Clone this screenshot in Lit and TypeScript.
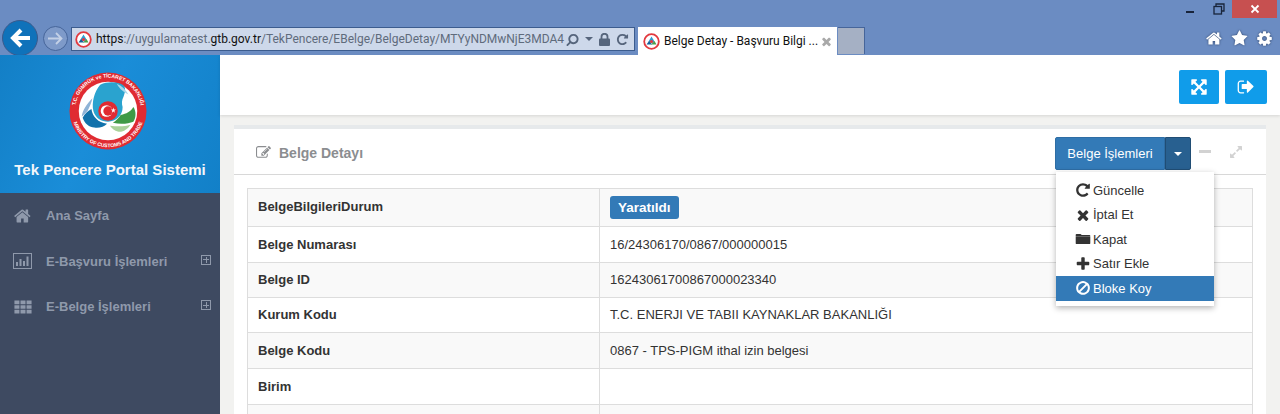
import { LitElement, html, css } from 'lit';
import { customElement } from 'lit/decorators.js';

// font-awesome style glyphs on a 1792 grid
const ICONS: Record<string, string> = {
  home: 'M1408 992v480q0 26-19 45t-45 19h-384v-384h-256v384h-384q-26 0-45-19t-19-45v-480q0-1 .5-3t.5-3l575-474 575 474q1 2 1 6zm223-69l-62 74q-8 9-21 11h-3q-13 0-21-7l-692-577-692 577q-12 8-24 7-13-2-21-11l-62-74q-8-10-7-23.5t11-21.5l719-599q32-26 76-26t76 26l244 204v-195q0-14 9-23t23-9h192q14 0 23 9t9 23v408l219 182q10 8 11 21.5t-7 23.5z',
  repeat: 'M1664 256v448q0 26-19 45t-45 19h-448q-42 0-59-40-17-39 14-69l138-138q-148-137-349-137-104 0-198.5 40.5t-163.5 109.5-109.5 163.5-40.5 198.5 40.5 198.5 109.5 163.5 163.5 109.5 198.5 40.5q119 0 225-52t179-147q7-10 23-12 15 0 25 9l137 138q9 8 9.5 20.5t-7.5 22.5q-109 132-264 204.5t-327 72.5q-156 0-298-61t-245-164-164-245-61-298 61-298 164-245 245-164 298-61q147 0 284.5 55.5t244.5 156.5l130-129q29-31 70-14 39 17 39 59z',
  times: 'M1490 1322q0 40-28 68l-136 136q-28 28-68 28t-68-28l-294-294-294 294q-28 28-68 28t-68-28l-136-136q-28-28-28-68t28-68l294-294-294-294q-28-28-28-68t28-68l136-136q28-28 68-28t68 28l294 294 294-294q28-28 68-28t68 28l136 136q28 28 28 68t-28 68l-294 294 294 294q28 28 28 68z',
  plus: 'M1600 736v192q0 40-28 68t-68 28h-416v416q0 40-28 68t-68 28h-192q-40 0-68-28t-28-68v-416h-416q-40 0-68-28t-28-68v-192q0-40 28-68t68-28h416v-416q0-40 28-68t68-28h192q40 0 68 28t28 68v416h416q40 0 68 28t28 68z',
  ban: 'M1440 893q0-161-87-295l-754 753q137 89 297 89 111 0 211.5-43.5t173.5-116.5 116-174.5 43-212.5zm-999 299l755-754q-135-91-300-91-148 0-273 73t-198 199-73 274q0 162 89 299zm1223-299q0 157-61 300t-163.5 246-245 164-298.5 61-298.5-61-245-164-163.5-246-61-300 61-299.5 163.5-245.5 245-164 298.5-61 298.5 61 245 164 163.5 245.5 61 299.5z',
  folder: 'M80 420q0-96 96-96h420q70 0 110 60l30 50h880q96 0 96 96v64h-1632zM80 612h1632v760q0 96-96 96h-1440q-96 0-96-96z',
  search: 'M1216 832q0-185-131.500-316.500t-316.500-131.500-316.500 131.500-131.500 316.500 131.500 316.500 316.500 131.500 316.500-131.500 131.500-316.500zm512 832q0 52-38 90t-90 38q-54 0-90-38l-343-342q-179 124-399 124-143 0-273.500-55.500t-225-150-150-225-55.500-273.500 55.500-273.500 150-225 225-150 273.500-55.500 273.500 55.500 225 150 150 225 55.500 273.500q0 220-124 399l343 343q37 37 37 90z',
  star: 'M1728 647q0 22-26 48l-363 354 86 500q1 7 1 20 0 21-10.500 35.500t-30.500 14.500q-19 0-40-12l-449-236-449 236q-22 12-40 12-21 0-31.500-14.500t-10.500-35.500q0-6 2-20l86-500-364-354q-25-27-25-48 0-37 56-46l502-73 225-455q19-41 49-41t49 41l225 455 502 73q56 9 56 46z',
  cog: 'M1152 896q0-106-75-181t-181-75-181 75-75 181 75 181 181 75 181-75 75-181zm512-109v222q0 12-8 23t-20 13l-185 28q-19 54-39 91 35 50 107 138 10 12 10 25t-9 23q-27 37-99 108t-94 71q-12 0-26-9l-138-108q-44 23-91 38-16 136-29 186-7 28-36 28h-222q-14 0-24.500-8.500t-11.500-21.500l-28-184q-49-16-90-37l-141 107q-10 9-25 9-14 0-25-11-126-114-165-168-7-10-7-23 0-12 8-23 15-21 51-66.500t54-70.500q-27-50-41-99l-183-27q-13-2-21-12.500t-8-23.500v-222q0-12 8-23t19-13l186-28q14-46 39-92-40-57-107-138-10-12-10-24 0-10 9-23 26-36 98.500-107.500t94.500-71.500q13 0 26 10l138 107q44-23 91-38 16-136 29-186 7-28 36-28h222q14 0 24.500 8.500t11.500 21.500l28 184q49 16 90 37l142-107q9-9 24-9 13 0 25 10 129 119 165 170 7 8 7 22 0 12-8 23-15 21-51 66.500t-54 70.500q26 50 41 98l183 28q13 2 21 12.500t8 23.500z',
  arrows: 'M1411 541l-355 355 355 355 144-144q29-31 70-14 39 17 39 59v448q0 26-19 45t-45 19h-448q-42 0-59-40-17-39 14-69l144-144-355-355-355 355 144 144q31 30 14 69-17 40-59 40h-448q-26 0-45-19t-19-45v-448q0-42 40-59 39-17 69 14l144 144 355-355-355-355-144 144q-19 19-45 19-12 0-24-5-40-17-40-59v-448q0-26 19-45t45-19h448q42 0 59 40 17 39-14 69l-144 144 355 355 355-355-144-144q-31-30-14-69 17-40 59-40h448q26 0 45 19t19 45v448q0 42-39 59-13 5-25 5-26 0-45-19z',
  expand: 'M883 1056q0 13-10 23l-332 332 144 144q19 19 19 45t-19 45-45 19h-448q-26 0-45-19t-19-45v-448q0-26 19-45t45-19 45 19l144 144 332-332q10-10 23-10t23 10l114 114q10 10 10 23zm781-864v448q0 26-19 45t-45 19-45-19l-144-144-332 332q-10 10-23 10t-23-10l-114-114q-10-10-10-23t10-23l332-332-144-144q-19-19-19-45t19-45 45-19h448q26 0 45 19t19 45z',
  th: 'M128 320h448v320h-448zM672 320h448v320h-448zM1216 320h448v320h-448zM128 736h448v320h-448zM672 736h448v320h-448zM1216 736h448v320h-448zM128 1152h448v320h-448zM672 1152h448v320h-448zM1216 1152h448v320h-448z',
  signout: 'M704 1440q0 4 1 20t.5 26.500-3 23.500-10 19.500-20.500 6.500h-320q-119 0-203.500-84.500t-84.500-203.500v-704q0-119 84.500-203.500t203.500-84.500h320q13 0 22.500 9.500t9.500 22.500q0 4 1 20t.5 26.500-3 23.500-10 19.500-20.500 6.500h-320q-66 0-113 47t-47 113v704q0 66 47 113t113 47h312l11.500 1 11.500 3 8 5.500 7 9 2 13.500zM1632 896l-544 544q-19 19-45 19t-45-19-19-45v-288h-448q-26 0-45-19t-19-45v-384q0-26 19-45t45-19h448v-288q0-26 19-45t45-19 45 19l544 544q19 19 19 45z',
  edit: 'M888 1184l116-116-152-152-116 116v56h96v96h56zm440-720q-16-16-33 1l-350 350q-17 17-1 33t33-1l350-350q17-17 1-33zm80 594v190q0 119-84.500 203.500t-203.500 84.500h-832q-119 0-203.500-84.500t-84.500-203.500v-832q0-119 84.500-203.500t203.500-84.500h832q63 0 117 25 15 7 18 23 3 17-9 29l-49 49q-14 14-32 8-23-6-45-6h-832q-66 0-113 47t-47 113v832q0 66 47 113t113 47h832q66 0 113-47t47-113v-126q0-13 9-22l64-64q15-15 35-7t20 29zm-96-738l288 288-672 672h-288v-288zm444 132l-92 92-288-288 92-92q28-28 68-28t68 28l152 152q28 28 28 68t-28 68z',
};

const icon = (name: string, size: number, color = 'currentColor') => html`
  <svg class="ico" style="flex:none" width=${size} height=${size} viewBox="0 0 1792 1792" fill=${color}><path d=${ICONS[name]}></path></svg>
`;

const crest = (size: number) => html`
  <svg width=${size} height=${size} viewBox="0 0 80 80">
    <defs>
      <path id="arcTop" d="M6.500 44a33.800 33.800 0 1 1 67 0"></path>
      <path id="arcBot" d="M2.800 40a37.200 37.200 0 0 0 74.400 0"></path>
    </defs>
    <circle cx="40" cy="40" r="39.500" fill="#e02b32"></circle>
    <circle cx="40" cy="40" r="30" fill="#fff"></circle>
    <path d="M32 13c7-3 14-3 21-1 6 2 5 8 3 13-2 4-2 7-1 11 0 9-7 15-15 15-7 0-13-4-15-11-2-9 1-20 7-27z" fill="#2aa3cf"></path>
    <path d="M49 12c5 2 9 6 12 11-4-2-9-5-12-11z" fill="#a8d6ea"></path>
    <path d="M14 47c2-4 5-7 9-9 1 8 7 14 16 15-3 3-8 5-13 4-5 0-10-4-12-10z" fill="#1272ab"></path>
    <path d="M13 46c1-7 5-13 11-19-1 5-3 9-5 13-2 2-4 4-6 6z" fill="#8fb3d6"></path>
    <path d="M53 44c6-1 10-3 13-8 3 4 3 11 0 15-5 2-13 3-21 1 3-2 6-5 8-8z" fill="#3f9a46"></path>
    <path d="M42 55c8 1 15 1 21-1-3 5-8 8-13 7-3-1-6-3-8-6z" fill="#a9d29a"></path>
    <circle cx="40" cy="40" r="10" fill="#e02b32"></circle>
    <circle cx="38.500" cy="40" r="6" fill="#fff"></circle>
    <circle cx="40" cy="40" r="4.800" fill="#e02b32"></circle>
    <path d="M45.500 36.500l.6 2 2 0-1.600 1.200.6 2-1.600-1.200-1.600 1.200.6-2-1.600-1.200 2 0z" fill="#fff"></path>
    <text class="crest-text"><textPath href="#arcTop" startOffset="50%" text-anchor="middle">T.C. GÜMRÜK ve TİCARET BAKANLIĞI</textPath></text>
    <text class="crest-text"><textPath href="#arcBot" startOffset="50%" text-anchor="middle">MINISTRY OF CUSTOMS AND TRADE</textPath></text>
  </svg>
`;

const favicon = () => html`
  <svg style="flex:none" width="17" height="17" viewBox="0 0 17 17">
    <circle cx="8.500" cy="8.500" r="7.300" fill="#fff" stroke="#e2393f" stroke-width="1.800"></circle>
    <path d="M8.500 3.500l3 5-3 2-3-2z" fill="#2f9ad0"></path>
    <path d="M3.500 11.500l2.500-3.500 3 3.500z" fill="#145f9c"></path>
    <path d="M8 11.500l3.500-3.500 2 3.500z" fill="#4a9e4a"></path>
    <circle cx="8.500" cy="8.500" r="1.600" fill="#e2393f"></circle>
  </svg>
`;

@customElement('browser-bar')
export class BrowserBar extends LitElement {
  static styles = css`
    :host {
      display: block;
      height: 55px;
      background: #6b8cc2;
      font-family: Roboto, sans-serif;
    }
    .caption {
      height: 18px;
      display: flex;
      justify-content: flex-end;
      padding-right: 3px;
    }
    .win {
      display: flex;
      align-items: center;
      justify-content: center;
    }
    .min { width: 20px; margin-right: 13px; }
    .min i { display: block; width: 8px; height: 2px; margin-top: 6px; background: #18243a; }
    .restore { width: 12px; margin-right: 7px; }
    .close { width: 45px; background: #c75050; }
    .tools {
      height: 37px;
      display: flex;
      align-items: flex-start;
      padding-left: 2px;
    }
    .back {
      width: 36px;
      height: 36px;
      margin-top: 2px;
      box-sizing: border-box;
      border-radius: 50%;
      background: #0f72ba;
      border: 1px solid #3a5a8c;
      display: flex;
      align-items: center;
      justify-content: center;
    }
    .fwd {
      width: 25px;
      height: 25px;
      margin: 8px 0 0 5px;
      box-sizing: border-box;
      border-radius: 50%;
      background: #7e9ac9;
      border: 1px solid #46659a;
      display: flex;
      align-items: center;
      justify-content: center;
    }
    .address {
      width: 564px;
      height: 24px;
      margin: 9px 0 0 3px;
      box-sizing: border-box;
      display: flex;
      align-items: center;
      padding: 0 5px 0 3px;
      background: #cdd8ea;
      border: 1px solid #3c5c8e;
      font-size: 12px;
      color: #5f6b7c;
      white-space: nowrap;
    }
    .url { margin-left: 4px; flex: 1; min-width: 0; }
    .url b { font-weight: 400; color: #111; }
    .addr-ico { display: flex; align-items: center; gap: 6px; color: #56657c; }
    .flip { display: flex; transform: scaleX(-1); }
    .caret { width: 0; height: 0; border: 4px solid transparent; border-top: 4px solid #56657c; border-bottom: 0; }
    .tab {
      width: 199px;
      height: 28px;
      margin: 9px 0 0 3px;
      box-sizing: border-box;
      display: flex;
      align-items: center;
      padding: 0 4px 0 5px;
      background: #fff;
      font-size: 12px;
      color: #111;
      white-space: nowrap;
    }
    .tab span { margin-left: 4px; flex: 1; }
    .newtab {
      width: 27px;
      height: 27px;
      margin: 9px 0 0 1px;
      box-sizing: border-box;
      background: #a5b0c4;
      border: 1px solid #46659a;
      border-bottom: 0;
      border-left: 0;
    }
    .right {
      margin-left: auto;
      display: flex;
      gap: 8px;
      padding: 12px 7px 0 0;
    }
    .right svg { filter: drop-shadow(0 0 1px #2c4166); }
  `;

  render() {
    return html`
      <div class="caption">
        <div class="win min"><i></i></div>
        <div class="win restore">
          <svg width="12" height="12" viewBox="0 0 12 12" fill="none" stroke="#18243a" stroke-width="1.300">
            <path d="M3 3V1h8v7H9"></path><rect x="1" y="3.500" width="7.500" height="7.500"></rect>
          </svg>
        </div>
        <div class="win close">
          <svg width="10" height="10" viewBox="0 0 10 10" stroke="#fff" stroke-width="1.800"><path d="M1.500 1.500l7 7M8.500 1.500l-7 7"></path></svg>
        </div>
      </div>
      <div class="tools">
        <div class="back">
          <svg width="22" height="20" viewBox="0 0 22 20" fill="none" stroke="#fff" stroke-width="4"><path d="M21 10H4M12 2l-8 8 8 8"></path></svg>
        </div>
        <div class="fwd">
          <svg width="15" height="13" viewBox="0 0 15 13" fill="none" stroke="#c3d0e6" stroke-width="1.800"><path d="M0 6.500h13M8 1l5.500 5.500L8 12"></path></svg>
        </div>
        <div class="address">
          ${favicon()}
          <div class="url"><b>https</b>://uygulamatest.<b>gtb.gov.tr</b>/TekPencere/EBelge/BelgeDetay/MTYyNDMwNjE3MDA4</div>
          <div class="addr-ico">
            <span class="flip">${icon('search', 13)}</span><i class="caret"></i>
            <svg width="11" height="13" viewBox="0 0 11 13" fill="currentColor">
              <rect x="0" y="5.500" width="11" height="7.500" rx="1"></rect>
              <path d="M2.500 6V3.800a3 3 0 0 1 6 0V6" fill="none" stroke="currentColor" stroke-width="1.800"></path>
            </svg>
            ${icon('repeat', 13)}
          </div>
        </div>
        <div class="tab">
          ${favicon()}
          <span>Belge Detay - Başvuru Bilgi ...</span>
          ${icon('times', 13, '#a9a9a9')}
        </div>
        <div class="newtab"></div>
        <div class="right">
          ${icon('home', 17, '#fff')}${icon('star', 17, '#fff')}${icon('cog', 17, '#fff')}
        </div>
      </div>
    `;
  }
}

@customElement('side-bar')
export class SideBar extends LitElement {
  static styles = css`
    :host {
      display: block;
      width: 220px;
      flex: none;
      background: #3e4a61;
      font-family: "Liberation Sans", Arial, sans-serif;
    }
    .brand {
      height: 138px;
      box-sizing: border-box;
      padding-top: 17px;
      display: flex;
      flex-direction: column;
      align-items: center;
      background: linear-gradient(115deg, #137fc6 0%, #1a8dd8 45%, #1280c8 100%);
    }
    .brand svg { margin-right: 4px; }
    .crest-text {
      font: bold 5.200px "Liberation Sans", sans-serif;
      fill: #fff;
    }
    .brand h1 {
      margin: 11px 0 0;
      font-size: 15px;
      font-weight: 700;
      color: #f1f6fb;
      white-space: nowrap;
    }
    .menu {
      display: flex;
      flex-direction: column;
    }
    .item {
      height: 45.500px;
      display: flex;
      align-items: center;
      padding: 0 9px 0 13px;
      color: #8f99ab;
      font-size: 13px;
      font-weight: 700;
    }
    .item .i { width: 19px; height: 19px; display: flex; align-items: center; justify-content: center; margin-right: 14px; }
    .item span { flex: 1; }
    .box {
      width: 8px;
      height: 8px;
      border: 1px solid #8f99ab;
      position: relative;
      margin-top: -3px;
    }
    .box::before { content: ""; position: absolute; left: 1px; right: 1px; top: 3.500px; height: 1px; background: #8f99ab; }
    .box::after { content: ""; position: absolute; top: 1px; bottom: 1px; left: 3.500px; width: 1px; background: #8f99ab; }
  `;

  render() {
    return html`
      <div class="brand">
        ${crest(78)}
        <h1>Tek Pencere Portal Sistemi</h1>
      </div>
      <div class="menu">
        <div class="item"><div class="i">${icon('home', 18)}</div><span>Ana Sayfa</span></div>
        <div class="item">
          <div class="i">
            <svg width="19" height="16" viewBox="0 0 19 16" fill="#8f99ab">
              <rect x=".5" y=".5" width="18" height="15" fill="none" stroke="#8f99ab"></rect>
              <rect x="3" y="9" width="2" height="4"></rect><rect x="6.500" y="6" width="2" height="7"></rect>
              <rect x="10" y="8" width="2" height="5"></rect><rect x="13.500" y="3.500" width="2" height="9.500"></rect>
            </svg>
          </div>
          <span>E-Başvuru İşlemleri</span><i class="box"></i>
        </div>
        <div class="item"><div class="i">${icon('th', 20)}</div><span>E-Belge İşlemleri</span><i class="box"></i></div>
      </div>
    `;
  }
}

const ROWS: [string, string, number][] = [
  ['Belge Numarası', '16/24306170/0867/000000015', 36],
  ['Belge ID', '16243061700867000023340', 35],
  ['Kurum Kodu', 'T.C. ENERJI VE TABII KAYNAKLAR BAKANLIĞI', 35],
  ['Belge Kodu', '0867 - TPS-PIGM ithal izin belgesi', 36],
  ['Birim', '', 36],
  ['', '', 36],
];

@customElement('app-root')
export class AppRoot extends LitElement {
  static styles = css`
    :host {
      display: block;
      height: 100vh;
      overflow: hidden;
      font-family: "Liberation Sans", Arial, sans-serif;
      color: #333;
    }
    .page { display: flex; height: 359px; overflow: hidden; }
    .main { flex: 1; min-width: 0; background: #f2f2f0; }
    .top {
      height: 60px;
      box-sizing: border-box;
      display: flex;
      justify-content: flex-end;
      gap: 6px;
      padding: 15px 13px 0 0;
      background: #fff;
      box-shadow: 0 1px 3px rgba(0, 0, 0, .12);
    }
    .top button {
      width: 40px;
      height: 34px;
      padding: 0;
      border: 0;
      border-radius: 2px;
      background: #109cea;
      display: flex;
      align-items: center;
      justify-content: center;
    }
    .top button + button { width: 42px; }
    .panel {
      margin: 10px 14px 0;
      background: #fff;
      border-top: 4px solid #e6e9eb;
    }
    .head {
      position: relative;
      height: 45px;
      display: flex;
      align-items: center;
      padding: 0 23px 0 22px;
      border-bottom: 1px solid #d8d8d8;
      color: #8b8d90;
    }
    .head > .ico { margin-top: 2px; }
    .head h2 { margin: 3px 0 0 8px; font-size: 14px; font-weight: 700; flex: 1; }
    .group { display: flex; height: 33px; color: #fff; font-size: 13px; margin-top: 4px; }
    .group .label {
      width: 110px;
      display: flex;
      align-items: center;
      justify-content: center;
      background: #337ab7;
      border: 1px solid #2e6da4;
      border-radius: 2px 0 0 2px;
      box-sizing: border-box;
    }
    .group .tog {
      width: 26px;
      display: flex;
      align-items: center;
      justify-content: center;
      background: #286090;
      border: 1px solid #204d74;
      border-radius: 0 2px 2px 0;
      box-sizing: border-box;
    }
    .tog i { width: 0; height: 0; border: 4px solid transparent; border-top: 4px solid #fff; border-bottom: 0; }
    .tools { display: flex; align-items: center; margin-left: 8px; gap: 18px; color: #ccc; }
    .tools i { display: block; width: 12px; height: 3px; background: #d2d2d2; }
    .body { padding: 13px 13px 0; }
    table {
      width: 100%;
      border-collapse: collapse;
      font-size: 13px;
      color: #333;
    }
    td {
      border: 1px solid #ddd;
      padding: 0 10px 1px;
      box-sizing: border-box;
    }
    td:first-child { width: 352px; font-weight: 700; }
    tr:nth-child(odd) td { background: #f9f9f9; }
    tr:first-child td:first-child { padding-bottom: 3px; }
    .badge {
      display: inline-block;
      padding: 4px 8px;
      border-radius: 3px;
      background: #337ab7;
      color: #fff;
      font-weight: 700;
      font-size: 13.500px;
      line-height: 15px;
    }
    .menu {
      position: absolute;
      right: 52px;
      top: 43px;
      z-index: 5;
      width: 158px;
      padding: 6px 0 5.500px;
      background: #fff;
      box-shadow: 0 2px 6px rgba(0, 0, 0, .3);
      color: #333;
      font-size: 13px;
    }
    .menu div {
      height: 24.500px;
      display: flex;
      align-items: center;
      padding-left: 19px;
      gap: 2px;
    }
    .menu div.active { background: #337ab7; color: #fff; }
  `;

  render() {
    return html`
      <browser-bar></browser-bar>
      <div class="page">
        <side-bar></side-bar>
        <div class="main">
          <div class="top">
            <button>${icon('arrows', 18, '#fff')}</button>
            <button>${icon('signout', 18, '#fff')}</button>
          </div>
          <div class="panel">
            <div class="head">
              ${icon('edit', 15)}
              <h2>Belge Detayı</h2>
              <div class="group">
                <div class="label">Belge İşlemleri</div>
                <div class="tog"><i></i></div>
              </div>
              <div class="tools"><i></i>${icon('expand', 14, '#d2d2d2')}</div>
              <div class="menu">
                <div>${icon('repeat', 16)}Güncelle</div>
                <div>${icon('times', 16)}İptal Et</div>
                <div>${icon('folder', 16)}Kapat</div>
                <div>${icon('plus', 16)}Satır Ekle</div>
                <div class="active">${icon('ban', 16)}Bloke Koy</div>
              </div>
            </div>
            <div class="body">
              <table>
                <tr style="height:38px">
                  <td>BelgeBilgileriDurum</td>
                  <td><span class="badge">Yaratıldı</span></td>
                </tr>
                ${ROWS.map(r => html`<tr style="height:${r[2]}px"><td>${r[0]}</td><td>${r[1]}</td></tr>`)}
              </table>
            </div>
          </div>
        </div>
      </div>
    `;
  }
}
